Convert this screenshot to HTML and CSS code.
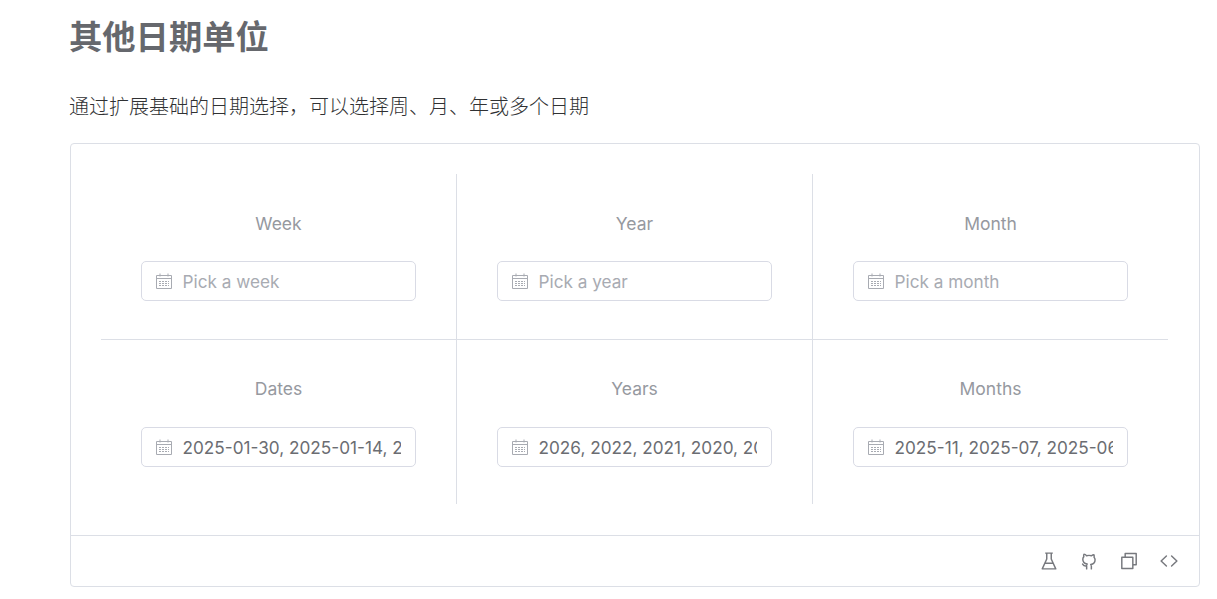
FILE: index.html
```html
<!DOCTYPE html>
<html lang="zh">
<head>
<meta charset="utf-8">
<title>其他日期单位</title>
<link rel="stylesheet" href="styles.css">
</head>
<body>
<svg class="defs" width="0" height="0" aria-hidden="true">
  <symbol id="cal" viewBox="0 0 16 16">
    <path fill="none" stroke="currentColor" stroke-width="1" d="M.5 2.500h15v13H.5zM.5 5.500h15M4 .5v3M12 .5v3"/>
    <path fill="none" stroke="currentColor" stroke-width="1" stroke-dasharray="2 1" d="M3 8.500h10M3 10.500h10M3 12.500h10"/>
  </symbol>
</svg>
<main class="page">
  <h2 class="title">其他日期单位</h2>
  <p class="lead">通过扩展基础的日期选择，可以选择周、月、年或多个日期</p>
  <section class="card">
    <div class="demo">
      <div class="grid">
        <div class="cell cell-r cell-b"><span class="label">Week</span>
          <div class="input"><svg class="cal"><use href="#cal"/></svg><span class="ph">Pick a week</span></div></div>
        <div class="cell cell-r cell-b"><span class="label">Year</span>
          <div class="input"><svg class="cal"><use href="#cal"/></svg><span class="ph">Pick a year</span></div></div>
        <div class="cell cell-b"><span class="label">Month</span>
          <div class="input"><svg class="cal"><use href="#cal"/></svg><span class="ph">Pick a month</span></div></div>
        <div class="cell cell-r cell-low"><span class="label">Dates</span>
          <div class="input"><svg class="cal"><use href="#cal"/></svg><span class="val">2025-01-30, 2025-01-14, 2025-01-09</span></div></div>
        <div class="cell cell-r cell-low"><span class="label">Years</span>
          <div class="input"><svg class="cal"><use href="#cal"/></svg><span class="val">2026, 2022, 2021, 2020, 2019</span></div></div>
        <div class="cell cell-low"><span class="label">Months</span>
          <div class="input"><svg class="cal"><use href="#cal"/></svg><span class="val">2025-11, 2025-07, 2025-06, 2025-01</span></div></div>
      </div>
    </div>
    <footer class="tools">
      <svg class="tool" viewBox="0 0 16 16"><path fill="none" stroke="currentColor" stroke-width="1.300" stroke-linejoin="round" d="M4.600 1h6.800M6 1v5.200L2 15h12L10 6.200V1M4.200 10h7.600"/></svg>
      <svg class="tool" viewBox="0 0 16 16"><path fill="none" stroke="currentColor" stroke-width="1.300" stroke-linecap="round" stroke-linejoin="round" d="M5.900 15v-2.600c-2.200.5-2.900-.5-3.600-1.700M10.100 15v-2.400c0-.8-.2-1.200-.6-1.500 1.900-.2 3.900-1 3.900-4.200 0-.9-.3-1.700-.9-2.300.2-.6.2-1.400-.1-2.200-.8 0-1.500.3-2.200.9a8 8 0 0 0-4.400 0C5 2.200 4.300 1.900 3.500 1.900c-.3.8-.3 1.600-.1 2.200-.6.6-.9 1.400-.9 2.300 0 3.200 2 4 3.900 4.200-.3.3-.5.7-.5 1.200"/></svg>
      <svg class="tool" viewBox="0 0 16 16"><path fill="none" stroke="currentColor" stroke-width="1.300" stroke-linejoin="round" d="M1.600 4.600h9.800v10H1.600zM4.600 4.600V1.400h9.800v10h-3"/></svg>
      <svg class="tool" viewBox="0 0 16 16"><path fill="none" stroke="currentColor" stroke-width="1.300" stroke-linecap="round" stroke-linejoin="round" d="M5.700 3.500 1 8l4.700 4.500M10.300 3.500 15 8l-4.700 4.500"/></svg>
    </footer>
  </section>
</main>
</body>
</html>
```
FILE: styles.css
```css
* { box-sizing: border-box; }
html, body { margin: 0; height: 599px; overflow: hidden; background: #fff; }
body { font-family: Inter, "Noto Sans CJK SC", sans-serif; }
.defs { display: block; height: 0; }
.page { width: 1130px; margin-left: 70px; padding-top: 12px; }
.title { margin: 0 0 0 -1px; height: 50px; font-size: 33.300px; line-height: 50px; font-weight: 700; color: #66686d; }
.lead { margin: 0 0 0 -1px; padding-top: 31px; height: 81px; font-size: 20px; line-height: 28px; font-weight: 300; color: #303133; }
.card { height: 444px; border: 1px solid #dcdfe6; border-radius: 4px; display: flex; flex-direction: column; }
.demo { height: 392px; padding: 30px 30px 0; border-bottom: 1px solid #dcdfe6; }
.grid { display: grid; grid-template-columns: 356px 356px 355px; grid-template-rows: 166px 164px; }
.cell { display: flex; flex-direction: column; align-items: center; padding-top: 30px; }
.cell-low { padding-top: 29px; }
.cell-r { border-right: 1px solid #dcdfe6; }
.cell-b { border-bottom: 1px solid #dcdfe6; }
.label { display: block; height: 40px; font-size: 17.500px; line-height: 40px; color: #96999f; }
.input { width: 275px; height: 40px; margin-top: 17px; padding: 0 14px; display: flex; align-items: center; gap: 10.500px; border: 1px solid #d9dbe5; border-radius: 5px; overflow: hidden; font-size: 17.200px; }
.cell-low .input { margin-top: 18px; }
.cal { width: 16px; height: 16px; flex: none; color: #a8abb2; }
.ph { color: #a8abb2; white-space: nowrap; }
.val { color: #6b6d72; white-space: nowrap; overflow: hidden; }
.tools { flex: 1; display: flex; justify-content: flex-end; align-items: center; gap: 22px; padding-right: 21px; color: #77797e; }
.tool { width: 18px; height: 18px; flex: none; }
```
